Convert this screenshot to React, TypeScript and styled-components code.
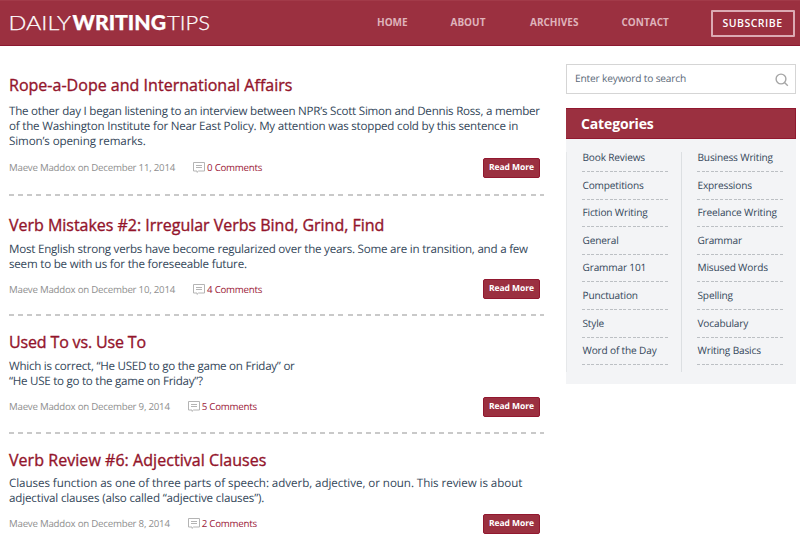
import React from 'react'
import styled, { createGlobalStyle } from 'styled-components'

const GlobalStyle = createGlobalStyle`
    *{
        box-sizing: border-box;
    }
    body{
        margin: 0;
        background: #fff;
        font-family: "Open Sans", "Noto Sans", sans-serif;
        overflow: hidden;
    }
    h1, h2, p, ul{
        margin: 0;
        padding: 0;
    }
    a{
        color: inherit;
        text-decoration: none;
    }
`
const Page = styled.div`
    width: 800px;
    height: 540px;
    overflow: hidden;
`
const Header = styled.header`
    height: 46px;
    padding: 0 5px 0 8px;
    display: flex;
    align-items: center;
    background-color: #9b3040;
    border-top: 1px solid #a23a49;
    border-bottom: 1px solid #8c1830;
`
const Logo = styled.svg`
    width: 204px;
    height: 32px;
    flex: none;
    text{
        font-family: Lato, sans-serif;
        font-size: 20px;
        font-weight: 300;
        fill: #fff;
        stroke: #fff;
        stroke-width: .25px;
    }
    .bold{
        font-weight: 900;
    }
`
const Nav = styled.nav`
    margin: 0 0 2px 165px;
    display: grid;
    grid-template-columns: 73.5px 79.5px 91.5px 89px;
    font-size: 10px;
    line-height: 14px;
    font-weight: 700;
    color: #dfb3bb;
`
const Subscribe = styled.button`
    width: 84px;
    height: 27px;
    flex: none;
    padding: 0;
    border: 2px solid #dcaab3;
    border-radius: 1px;
    background: none;
    color: #fff;
    font: 600 10.5px/22px "Open Sans", sans-serif;
    letter-spacing: .5px;
`
const Main = styled.main`
    display: flex;
    justify-content: space-between;
    padding: 0 4px 0 9px;
`
const Posts = styled.section`
    width: 535px;
`
const Post = styled.article<{ $top: number }>`
    padding-top: ${({ $top }) => $top}px;
`
const Title = styled.h2<{ $tracking: number }>`
    font-size: 16px;
    line-height: 22px;
    font-weight: 400;
    letter-spacing: ${({ $tracking }) => $tracking}px;
    -webkit-text-stroke: .35px #93142b;
    color: #93142b;
`
const Excerpt = styled.p<{ $gap: number }>`
    margin-top: ${({ $gap }) => $gap}px;
    font-size: 11.6px;
    line-height: 15.3px;
    color: #34475a;
    white-space: nowrap;
    text-rendering: geometricPrecision;
`
const Line = styled.span<{ $tracking: number }>`
    display: block;
    letter-spacing: ${({ $tracking }) => $tracking}px;
`
const Meta = styled.div<{ $gap: number }>`
    margin-top: ${({ $gap }) => $gap}px;
    height: 20px;
    padding-right: 4px;
    display: flex;
    align-items: center;
    font-size: 9.7px;
    letter-spacing: -.23px;
    text-rendering: geometricPrecision;
    color: #8f8f8f;
`
const Comments = styled.a`
    margin-left: 18px;
    display: flex;
    align-items: center;
    gap: 2px;
    color: #9b2038;
`
const ReadMore = styled.a`
    width: 57px;
    height: 20px;
    margin-left: auto;
    border-radius: 2px;
    background-color: #9b3040;
    border: 1px solid #91182f;
    color: #fff;
    font-size: 8.5px;
    line-height: 18px;
    letter-spacing: -.05px;
    font-weight: 700;
    text-align: center;
`
const Divider = styled.div<{ $gap: number }>`
    margin-top: ${({ $gap }) => $gap}px;
    height: 2px;
    background: repeating-linear-gradient(90deg, #c9c9c9 0 5px, transparent 5px 9.15px);
`
const Sidebar = styled.aside`
    width: 230px;
    padding-top: 18px;
`
const Search = styled.div`
    height: 30px;
    padding: 0 6px 2px 8px;
    display: flex;
    align-items: center;
    justify-content: space-between;
    border: 1px solid #d5d5d5;
    font-size: 10.2px;
    letter-spacing: -.18px;
    text-rendering: geometricPrecision;
    color: #5b6978;
    svg{
        margin-top: 3px;
    }
`
const CategoriesTitle = styled.h2`
    height: 31px;
    margin-top: 14px;
    padding-left: 15px;
    background-color: #9b3040;
    border: 1px solid #91182f;
    border-width: 1px 1px 1px 0;
    color: #fff;
    font-size: 14px;
    line-height: 29px;
    letter-spacing: -.15px;
    font-weight: 700;
`
const Categories = styled.div`
    height: 245px;
    padding: 13px 0 12px 0;
    display: flex;
    background-color: #f3f4f6;
`
const Column = styled.ul`
    width: 115px;
    flex: none;
    padding-left: 14.5px;
    list-style: none;
    border-left: 1px solid #dcdfe2;
    &:first-child{
        border-color: #e6e8ea;
    }
`
const Category = styled.li`
    width: 86px;
    height: 27.6px;
    padding-left: 1px;
    font-size: 10.1px;
    line-height: 11px;
    letter-spacing: -.16px;
    text-rendering: geometricPrecision;
    color: #34475a;
    background: repeating-linear-gradient(90deg, #bcc0c4 0 3px, transparent 3px 4.6px) 0 19px / 100% 1px no-repeat;
`

type PostData = {
    title: string
    tracking: number
    lines: [string, number][]
    date: string
    comments: number
    space: number[]
}

// lines: the text of each line with its letter spacing
// space: above the title, above the text, above the meta row, above the divider
const posts: PostData[] = [
    {
        title: 'Rope-a-Dope and International Affairs',
        tracking: 0.02,
        lines: [
            ['The other day I began listening to an interview between NPR’s Scott Simon and Dennis Ross, a member', -0.235],
            ['of the Washington Institute for Near East Policy. My attention was stopped cold by this sentence in', -0.21],
            ['Simon’s opening remarks.', -0.12],
        ],
        date: 'December 11, 2014',
        comments: 0,
        space: [28, 7.5, 8.5, 16],
    },
    {
        title: 'Verb Mistakes #2: Irregular Verbs Bind, Grind, Find',
        tracking: -0.02,
        lines: [
            ['Most English strong verbs have become regularized over the years. Some are in transition, and a few', -0.23],
            ['seem to be with us for the foreseeable future.', -0.21],
        ],
        date: 'December 10, 2014',
        comments: 4,
        space: [18, 6, 7, 14.5],
    },
    {
        title: 'Used To vs. Use To',
        tracking: -0.15,
        lines: [
            ['Which is correct, “He USED to go the game on Friday” or', -0.26],
            ['“He USE to go to the game on Friday”?', -0.27],
        ],
        date: 'December 9, 2014',
        comments: 5,
        space: [15, 6, 7, 15],
    },
    {
        title: 'Verb Review #6: Adjectival Clauses',
        tracking: 0.05,
        lines: [
            ['Clauses function as one of three parts of speech: adverb, adjective, or noun. This review is about', -0.06],
            ['adjectival clauses (also called “adjective clauses”).', -0.17],
        ],
        date: 'December 8, 2014',
        comments: 2,
        space: [15, 5, 7.5, 16],
    },
]

const categories = [
    ['Book Reviews', 'Competitions', 'Fiction Writing', 'General', 'Grammar 101', 'Punctuation', 'Style', 'Word of the Day'],
    ['Business Writing', 'Expressions', 'Freelance Writing', 'Grammar', 'Misused Words', 'Spelling', 'Vocabulary', 'Writing Basics'],
]

function CommentIcon() {
  return (
    <svg width="12" height="11" viewBox="0 0 12 11" fill="none" stroke="#b4b4b4">
      <path d="M.5 .5h11v8.500H5.500L4 10.400V9H.5z" />
      <path d="M3 3.500h6M3 5.500h6" />
    </svg>
  )
}

function SearchIcon() {
  return (
    <svg width="14" height="14" viewBox="0 0 14 14" fill="none" stroke="#a6a6a6" strokeWidth="1.4">
      <circle cx="6" cy="6" r="4.900" />
      <path d="M9.500 9.500l3.300 3.300" />
    </svg>
  )
}

export default function App() {
  return (
    <Page>
      <GlobalStyle />
      <Header>
        <Logo>
          <text x="0.5" y="22.5" textLength="62.5" lengthAdjust="spacingAndGlyphs">DAILY</text>
          <text x="64.5" y="22.5" textLength="93.5" lengthAdjust="spacingAndGlyphs" className="bold">WRITING</text>
          <text x="159" y="22.5" textLength="43" lengthAdjust="spacingAndGlyphs">TIPS</text>
        </Logo>
        <Nav>
          <a href="#">HOME</a>
          <a href="#">ABOUT</a>
          <a href="#">ARCHIVES</a>
          <a href="#">CONTACT</a>
        </Nav>
        <Subscribe>SUBSCRIBE</Subscribe>
      </Header>
      <Main>
        <Posts>
          {posts.map((post, i) => (
            <Post key={post.title} $top={post.space[0]}>
              <Title $tracking={post.tracking}>{post.title}</Title>
              <Excerpt $gap={post.space[1]}>
                {post.lines.map(([text, tracking]) => (
                  <Line key={text} $tracking={tracking}>{text}</Line>
                ))}
              </Excerpt>
              <Meta $gap={post.space[2]}>
                <span>Maeve Maddox on {post.date}</span>
                <Comments href="#">
                  <CommentIcon />
                  {post.comments} Comments
                </Comments>
                <ReadMore href="#">Read More</ReadMore>
              </Meta>
              {i < posts.length - 1 && <Divider $gap={post.space[3]} />}
            </Post>
          ))}
        </Posts>
        <Sidebar>
          <Search>
            <span>Enter keyword to search</span>
            <SearchIcon />
          </Search>
          <CategoriesTitle>Categories</CategoriesTitle>
          <Categories>
            {categories.map((names) => (
              <Column key={names[0]}>
                {names.map((name) => <Category key={name}>{name}</Category>)}
              </Column>
            ))}
          </Categories>
        </Sidebar>
      </Main>
    </Page>
  )
}
